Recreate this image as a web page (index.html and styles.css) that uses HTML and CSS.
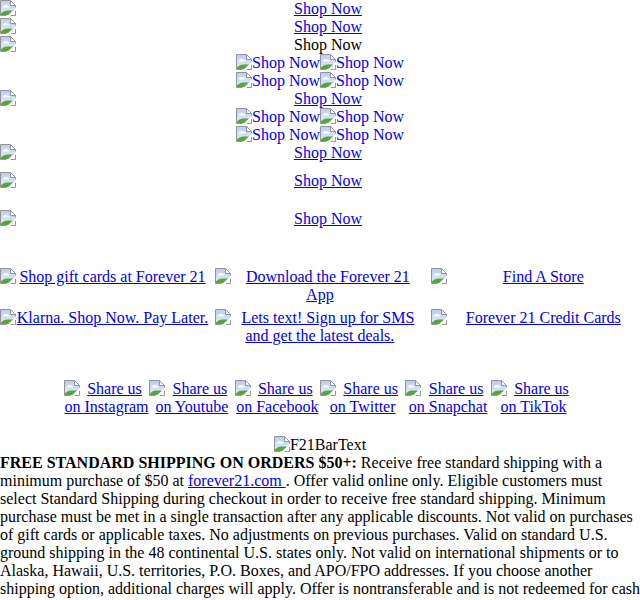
FILE: index.html
```html
<!DOCTYPE HTML>
<html>

<head>
  <title>Forever 21</title>
  <meta name="viewport" content="width=device-width, initial-scale=1.0">
  <link rel="icon" href="data:,">
  <link rel="stylesheet" href="styles.css">
</head>

<body>
  <svg class="defs" width="0" height="0">
    <defs>
      <linearGradient id="sky" x1="0" y1="0" x2="0" y2="1">
        <stop offset="0" stop-color="#b9cdf3"></stop>
        <stop offset="1" stop-color="#e6eefb"></stop>
      </linearGradient>
      <symbol id="broken" viewBox="0 0 16 16">
        <path d="M0.5 0.5H10.5L15.500 5.500V8L8.500 15.500H0.500Z" fill="url(#sky)"></path>
        <path d="M3 6.500C4 4.500 7 4.500 8 6C9.500 6 10 7 9 7.500H3.500C2.500 7.500 2.500 6.800 3 6.500Z" fill="#fff"></path>
        <path d="M1 15V13.500C3 11 6 10 9 10.500L13 10.500L8 15Z" fill="#57a636"></path>
        <path d="M10.500 0.500V5.500H15.500" fill="#fff"></path>
        <path d="M10.500 0.500H0.500V15.500H6.500M10.500 0.500L15.500 5.500V7.500M10.500 0.500V5.500H15.500" fill="none" stroke="#959595"></path>
        <path d="M15.500 11V15.500H11" fill="none" stroke="#959595"></path>
      </symbol>
    </defs>
  </svg>

  <!-- -------------------------------------------------------------------- -->

  <div class="banners">
    <div class="row"><svg class="pic side"><use href="#broken"></use></svg><a href="#">Shop Now</a></div>
    <div class="row"><svg class="pic side"><use href="#broken"></use></svg><a href="#">Shop Now</a></div>
    <div class="row"><svg class="pic side"><use href="#broken"></use></svg>Shop Now</div>
    <div class="row"><a class="plain" href="#"><svg class="pic"><use href="#broken"></use></svg>Shop Now</a><a class="plain" href="#"><svg class="pic"><use href="#broken"></use></svg>Shop Now</a></div>
    <div class="row"><a class="plain" href="#"><svg class="pic"><use href="#broken"></use></svg>Shop Now</a><a class="plain" href="#"><svg class="pic"><use href="#broken"></use></svg>Shop Now</a></div>
    <div class="row"><svg class="pic side"><use href="#broken"></use></svg><a href="#">Shop Now</a></div>
    <div class="row"><a class="plain" href="#"><svg class="pic"><use href="#broken"></use></svg>Shop Now</a><a class="plain" href="#"><svg class="pic"><use href="#broken"></use></svg>Shop Now</a></div>
    <div class="row"><a class="plain" href="#"><svg class="pic"><use href="#broken"></use></svg>Shop Now</a><a class="plain" href="#"><svg class="pic"><use href="#broken"></use></svg>Shop Now</a></div>
    <div class="row"><svg class="pic side"><use href="#broken"></use></svg><a href="#">Shop Now</a></div>
    <div class="row gap-s"><svg class="pic side"><use href="#broken"></use></svg><a href="#">Shop Now</a></div>
    <div class="row gap-m"><svg class="pic side"><use href="#broken"></use></svg><a href="#">Shop Now</a></div>
  </div>

  <!-- -------------------------------------------------------------------- -->

  <div class="links">
    <div class="cell"><svg class="pic side"><use href="#broken"></use></svg><a href="#">Shop gift cards at Forever 21</a></div>
    <div class="cell"><svg class="pic side"><use href="#broken"></use></svg><a href="#">Download the Forever 21 App</a></div>
    <div class="cell"><svg class="pic side"><use href="#broken"></use></svg><a href="#">Find A Store</a></div>
    <div class="cell"><svg class="pic side"><use href="#broken"></use></svg><a href="#">Klarna. Shop Now. Pay Later.</a></div>
    <div class="cell"><svg class="pic side"><use href="#broken"></use></svg><a href="#">Lets text! Sign up for SMS and get the latest deals.</a></div>
    <div class="cell"><svg class="pic side"><use href="#broken"></use></svg><a href="#">Forever 21 Credit Cards</a></div>
  </div>

  <!-- -------------------------------------------------------------------- -->

  <div class="social">
    <div class="cell"><svg class="pic side"><use href="#broken"></use></svg><a href="#">Share us on Instagram</a></div>
    <div class="cell"><svg class="pic side"><use href="#broken"></use></svg><a href="#">Share us on Youtube</a></div>
    <div class="cell"><svg class="pic side"><use href="#broken"></use></svg><a href="#">Share us on Facebook</a></div>
    <div class="cell"><svg class="pic side"><use href="#broken"></use></svg><a href="#">Share us on Twitter</a></div>
    <div class="cell"><svg class="pic side"><use href="#broken"></use></svg><a href="#">Share us on Snapchat</a></div>
    <div class="cell"><svg class="pic side"><use href="#broken"></use></svg><a href="#">Share us on TikTok</a></div>
  </div>

  <!-- -------------------------------------------------------------------- -->

  <div class="bar"><svg class="pic"><use href="#broken"></use></svg>F21BarText</div>
  <p class="terms"><b>FREE STANDARD SHIPPING ON ORDERS $50+:</b> Receive free standard shipping with a minimum purchase of $50 at <a href="#">forever21.com </a>. Offer valid online only. Eligible customers must select Standard Shipping during checkout in order to receive free standard shipping. Minimum purchase must be met in a single transaction after any applicable discounts. Not valid on purchases of gift cards or applicable taxes. No adjustments on previous purchases. Valid on standard U.S. ground shipping in the 48 continental U.S. states only. Not valid on international shipments or to Alaska, Hawaii, U.S. territories, P.O. Boxes, and APO/FPO addresses. If you choose another shipping option, additional charges will apply. Offer is nontransferable and is not redeemed for cash</p>
</body>

</html>
```

FILE: styles.css
```css
html {
  font-family: "Liberation Serif", serif;
  font-size: 16px;
  line-height: 18px;
  color: black;
}

body {
  margin: 0;
}

a {
  color: #0000EE;
}

.plain {
  text-decoration: none;
}

.defs {
  position: absolute;
}

/* -------------------------------- ICON ------------------------------- */

.pic {
  width: 16px;
  height: 16px;
  vertical-align: top;
}

.side {
  float: left;
}

/* ------------------------------ BANNERS ------------------------------ */

.row {
  text-align: center;
  height: 18px;
}

.gap-s {
  margin-top: 10px;
}

.gap-m {
  margin-top: 20px;
}

/* ------------------------------- LINKS ------------------------------- */

.links {
  display: grid;
  grid-template-columns: repeat(3, 209px);
  column-gap: 6.4px;
  row-gap: 5px;
  margin-top: 40px;
}

.cell {
  text-align: center;
}

/* ------------------------------- SOCIAL ------------------------------ */

.social {
  display: grid;
  grid-template-columns: repeat(6, 85.4px);
  justify-content: center;
  margin-top: 35px;
}

/* ------------------------------- TERMS ------------------------------- */

.bar {
  text-align: center;
  margin-top: 20px;
}

.terms {
  margin: 0;
}
```
